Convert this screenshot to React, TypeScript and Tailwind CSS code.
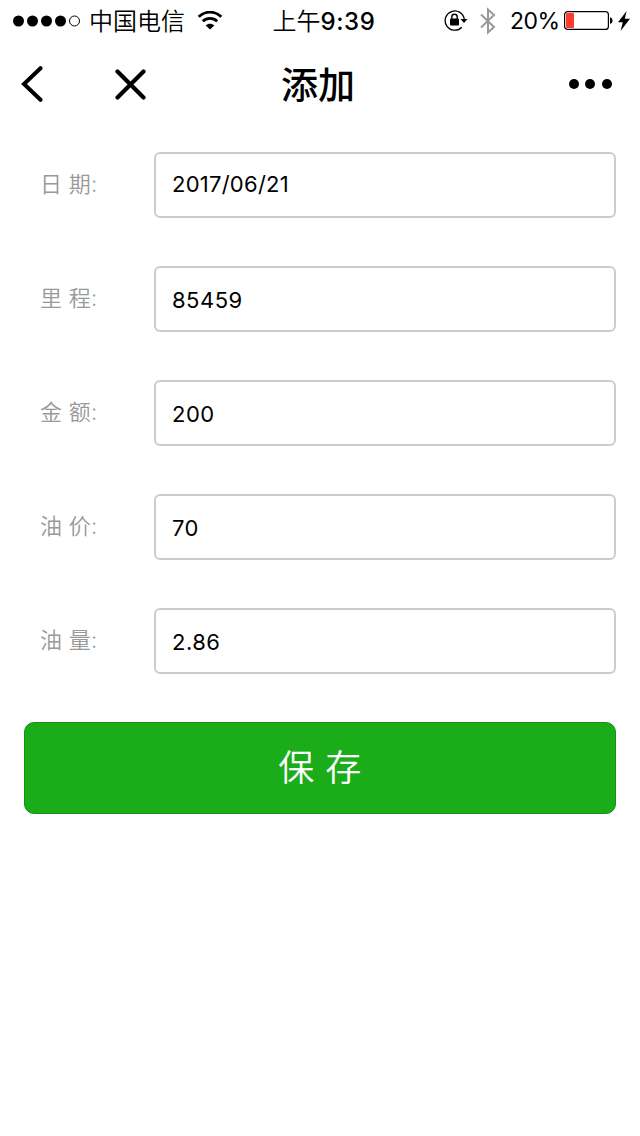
import { useState } from "react";

interface FieldProps {
  label: string;
  value: string;
  onChange: (value: string) => void;
  inputClassName?: string;
}

function Field({ label, value, onChange, inputClassName = "pt-0.5 tracking-[0.5px]" }: FieldProps) {
  return (
    <label className="flex h-[66px] items-center">
      <span className="w-[130px] shrink-0 whitespace-pre pb-0.5 pl-4 text-[22px] font-[350] tracking-[0.3px] text-[#999]">
        {label}
      </span>
      <input
        type="text"
        value={value}
        onChange={(e) => onChange(e.target.value)}
        className={`h-full min-w-0 flex-1 rounded-md border-2 border-[#ccc] bg-white px-4 text-[22px] text-black outline-none ${inputClassName}`}
      />
    </label>
  );
}

function StatusBar() {
  return (
    <header className="flex h-10 items-center justify-between pt-0.5 text-2xl leading-[38px] text-black">
      <div className="flex w-[260px] items-center">
        <svg width="68" height="12" viewBox="0 0 68 12" className="ml-[13px]">
          {[5.5, 19.5, 33.5, 47.5].map((cx) => (
            <circle key={cx} cx={cx} cy="6" r="5.5" />
          ))}
          <circle cx="61.5" cy="6" r="5" fill="none" stroke="#000" />
        </svg>
        <span className="ml-2 pt-px font-[350]">中国电信</span>
        <svg width="26" height="20" viewBox="0 0 26 20" className="ml-3" fill="none" stroke="#000" strokeWidth="2.8">
          <path d="M1.7 5.8C8-.4 18-.4 24.3 5.8" />
          <path d="M5.8 10.2c4.1-3.9 10.3-3.9 14.4 0" />
          <path d="M8.7 14.4c2.4-2.3 6.2-2.3 8.6 0L13 18.5z" fill="#000" stroke="none" />
        </svg>
      </div>
      <span className="whitespace-nowrap pl-2 pt-px font-[350]">
        上午<span className="font-medium tracking-[0.6px]">9:39</span>
      </span>
      <div className="flex w-[260px] items-center justify-end">
        <svg width="24" height="22" viewBox="0 0 24 22" fill="none">
          <path d="M17.7 17.2A9.6 9.6 0 1 1 20.3 9.5" stroke="#000" strokeWidth="1.3" />
          <path d="M16.5 9h7l-3.5 4z" fill="#000" />
          <rect x="6" y="8.5" width="9" height="7" rx="1" fill="#000" />
          <path d="M7.8 9V7a2.7 2.7 0 0 1 5.4 0V9" stroke="#000" strokeWidth="1.4" />
        </svg>
        <svg width="16" height="28" viewBox="0 0 16 28" className="ml-3" fill="none" stroke="#999" strokeWidth="2">
          <path d="M1 7.5 14 20 8 25.5V2.5L14 8 1 20.5" />
        </svg>
        <span className="ml-3.5 w-[48px] whitespace-nowrap text-[23px] tracking-[-0.5px]">20%</span>
        <svg width="50" height="20" viewBox="0 0 50 20" className="ml-1.5">
          <rect x=".6" y=".6" width="43.8" height="17.8" rx="3" fill="none" stroke="#000" strokeWidth="1.2" />
          <rect x="2" y="2" width="8" height="15" rx="1" fill="#ff3b30" />
          <path d="M46 6.2c3.4.6 3.4 6 0 6.6z" />
        </svg>
        <svg width="12" height="20" viewBox="0 0 12 20" className="ml-1 mr-2.5">
          <path d="M8.6 0 0 11.2h4.8L2.6 20 12 7.8H6.8z" />
        </svg>
      </div>
    </header>
  );
}

function NavBar() {
  return (
    <nav className="grid h-22 grid-cols-3 items-center">
      <div className="flex items-center">
        <button type="button" aria-label="返回" className="ml-[21px]">
          <svg width="22" height="36" viewBox="0 0 22 36" fill="none" stroke="#000" strokeWidth="4" strokeLinecap="round">
            <path d="M19.5 2.2 3 18l16.5 15.8" />
          </svg>
        </button>
        <button type="button" aria-label="关闭" className="ml-[71px]">
          <svg width="32" height="34" viewBox="0 0 32 34" fill="none" stroke="#000" strokeWidth="4.2" strokeLinecap="round">
            <path d="m3.5 4.500 26 26M29.5 4.500l-26 26" />
          </svg>
        </button>
      </div>
      <h1 className="pr-1 pt-1 text-center text-[37px] font-medium">添加</h1>
      <button type="button" aria-label="更多" className="mr-[27px] justify-self-end">
        <svg width="44" height="10" viewBox="0 0 44 10">
          <circle cx="5" cy="5" r="5" />
          <circle cx="21" cy="5" r="5" />
          <circle cx="38" cy="5" r="5" />
        </svg>
      </button>
    </nav>
  );
}

export default function App() {
  const [date, setDate] = useState("2017/06/21");
  const [mileage, setMileage] = useState("85459");
  const [amount, setAmount] = useState("200");
  const [price, setPrice] = useState("70");
  const [volume, setVolume] = useState("2.86");

  return (
    <div className="min-h-screen bg-white font-['Inter','Noto_Sans_CJK_SC',sans-serif]">
      <StatusBar />
      <NavBar />
      <form className="flex flex-col gap-12 px-6 pt-6" onSubmit={(e) => e.preventDefault()}>
        <Field
          label="日 期:"
          value={date}
          onChange={setDate}
          inputClassName="pb-0.5 tracking-[0.25px]"
        />
        <Field label="里 程:" value={mileage} onChange={setMileage} />
        <Field label="金 额:" value={amount} onChange={setAmount} />
        <Field label="油 价:" value={price} onChange={setPrice} />
        <Field label="油 量:" value={volume} onChange={setVolume} />
        <button
          type="submit"
          className="h-[92px] rounded-[10px] border border-[#178f17] bg-[#1aad19] text-4xl font-[350] tracking-[0.5px] text-white"
        >
          保 存
        </button>
      </form>
    </div>
  );
}
